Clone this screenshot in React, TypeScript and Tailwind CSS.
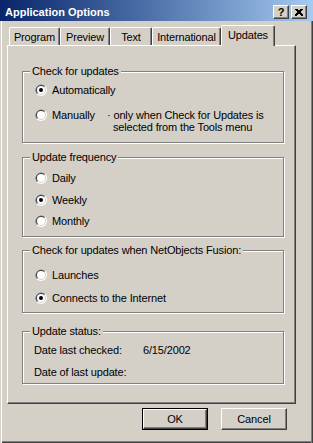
import React from "react";

const groupBox =
  "relative w-[262px] border border-[#808080] shadow-[inset_1px_1px_0_#fff,1px_1px_0_#fff]";

function Radio({ checked = false }: { checked?: boolean }) {
  return (
    <svg width="12" height="12" viewBox="0 0 12 12" className="shrink-0">
      <circle cx="6" cy="6" r="6" fill="#fff" />
      <path d="M1.76 10.24 A6 6 0 0 1 10.24 1.76 Z" fill="#808080" />
      <circle cx="6" cy="6" r="5" fill="#d4d0c8" />
      <path d="M2.46 9.54 A5 5 0 0 1 9.54 2.46 Z" fill="#404040" />
      <circle cx="6" cy="6" r="4" fill="#fff" />
      {checked && <circle cx="6" cy="6" r="2" fill="#000" />}
    </svg>
  );
}

function Option({ label, checked, className }: { label: string; checked?: boolean; className: string }) {
  return (
    <div className={`flex items-center gap-[5px] pl-[12px] h-[12px] leading-[12px] ${className}`}>
      <Radio checked={checked} />
      <span>{label}</span>
    </div>
  );
}

function Group({ title, className, children }: { title: string; className: string; children: React.ReactNode }) {
  return (
    <div className={`${groupBox} ${className}`}>
      <span className="absolute left-[7px] top-[-7px] bg-[#d4d0c8] px-[2px] leading-[12px]">{title}</span>
      {children}
    </div>
  );
}

const tabs = [
  { name: "Program", w: "w-[51px]" },
  { name: "Preview", w: "w-[50px]" },
  { name: "Text", w: "w-[42px]" },
  { name: "International", w: "w-[69px]" },
];

export default function App() {
  return (
    <div className="w-[313px] h-[443px] bg-[#d4d0c8] flex flex-col text-[11px] tracking-[-0.15px] text-black font-['Liberation_Sans',Arial,sans-serif] select-none">
      {/* title bar */}
      <div className="h-[21px] pt-[3px] shrink-0 flex items-center pl-[5px] pr-[6px] bg-gradient-to-r from-[#0a246a] to-[#a6caf0]">
        <span className="flex-1 text-white font-bold text-[11px] leading-[13px] tracking-normal">Application Options</span>
        <div className="flex gap-[2px]">
          <div className="w-[16px] h-[14px] bg-[#d4d0c8] border-t border-l border-white border-r border-b border-r-[#404040] border-b-[#404040] shadow-[inset_-1px_-1px_0_#808080] flex items-center justify-center font-bold text-[11px] leading-[11px] pt-[1px]">
            ?
          </div>
          <div className="w-[16px] h-[14px] bg-[#d4d0c8] border-t border-l border-white border-r border-b border-r-[#404040] border-b-[#404040] shadow-[inset_-1px_-1px_0_#808080] flex items-center justify-center">
            <svg width="8" height="7" viewBox="0 0 8 7">
              <path d="M0.5 0 L7.5 7 M1.5 0 L8.5 7 M7.5 0 L0.5 7 M6.5 0 L-0.5 7" stroke="#000" strokeWidth="1" shapeRendering="crispEdges" />
            </svg>
          </div>
        </div>
      </div>

      {/* body */}
      <div className="flex-1 flex flex-col shadow-[inset_1px_0_0_#d4d0c8,inset_2px_0_0_#fff,inset_-1px_0_0_#404040,inset_-2px_0_0_#808080,inset_0_-1px_0_#404040,inset_0_-2px_0_#808080]">
        {/* tabs */}
        <div className="flex items-end pl-[9px] pt-[3px] h-[24px]">
          {tabs.map((t) => (
            <div
              key={t.name}
              className={`${t.w} h-[18px] flex items-center justify-center border-t border-l border-white border-r border-r-[#404040] shadow-[inset_-1px_0_0_#808080] rounded-tl-[2px] rounded-tr-[2px] leading-[12px]`}
            >
              {t.name}
            </div>
          ))}
          <div className="relative z-10 w-[54px] h-[21px] mb-[-1px] bg-[#d4d0c8] flex justify-center pt-[3px] border-t border-l border-white border-r border-r-[#404040] shadow-[inset_-1px_0_0_#808080] rounded-tl-[2px] rounded-tr-[2px] leading-[12px]">
            Updates
          </div>
        </div>

        {/* panel */}
        <div className="ml-[7px] w-[289px] h-[359px] border border-t-white border-l-white border-r-[#404040] border-b-[#404040] shadow-[inset_-1px_-1px_0_#808080] pl-[14px] pt-[25px] flex flex-col">
          <Group title="Check for updates" className="h-[72px]">
            <Option label="Automatically" checked className="mt-[12px]" />
            <div className="flex items-start gap-[5px] pl-[12px] mt-[13px] leading-[12px]">
              <Radio />
              <span className="w-[50px]">Manually</span>
              <div>
                <div>· only when Check for Updates is</div>
                <div className="pl-[6px]">selected from the Tools menu</div>
              </div>
            </div>
          </Group>

          <Group title="Update frequency" className="h-[80px] mt-[14px]">
            <Option label="Daily" className="mt-[14px]" />
            <Option label="Weekly" checked className="mt-[10px]" />
            <Option label="Monthly" className="mt-[9px]" />
          </Group>

          <Group title="Check for updates when NetObjects Fusion:" className="h-[63px] mt-[13px]">
            <Option label="Launches" className="mt-[18px]" />
            <Option label="Connects to the Internet" checked className="mt-[11px]" />
          </Group>

          <Group title="Update status:" className="h-[53px] mt-[18px]">
            <div className="flex pl-[11px] mt-[12px] leading-[12px]">
              <span className="w-[109px]">Date last checked:</span>
              <span>6/15/2002</span>
            </div>
            <div className="flex pl-[11px] mt-[10px] leading-[12px]">
              <span className="w-[109px]">Date of last update:</span>
            </div>
          </Group>
        </div>

        {/* buttons */}
        <div className="flex justify-end gap-[13px] pr-[26px] mt-[4px]">
          <button className="w-[66px] h-[22px] border border-black bg-[#d4d0c8] flex">
            <span className="flex-1 flex items-center justify-center border-t border-l border-white border-r border-b border-r-[#404040] border-b-[#404040] shadow-[inset_-1px_-1px_0_#808080] leading-[12px]">
              OK
            </span>
          </button>
          <button className="w-[66px] h-[22px] bg-[#d4d0c8] flex items-center justify-center border-t border-l border-white border-r border-b border-r-[#404040] border-b-[#404040] shadow-[inset_-1px_-1px_0_#808080] leading-[12px]">
            Cancel
          </button>
        </div>
      </div>
    </div>
  );
}
